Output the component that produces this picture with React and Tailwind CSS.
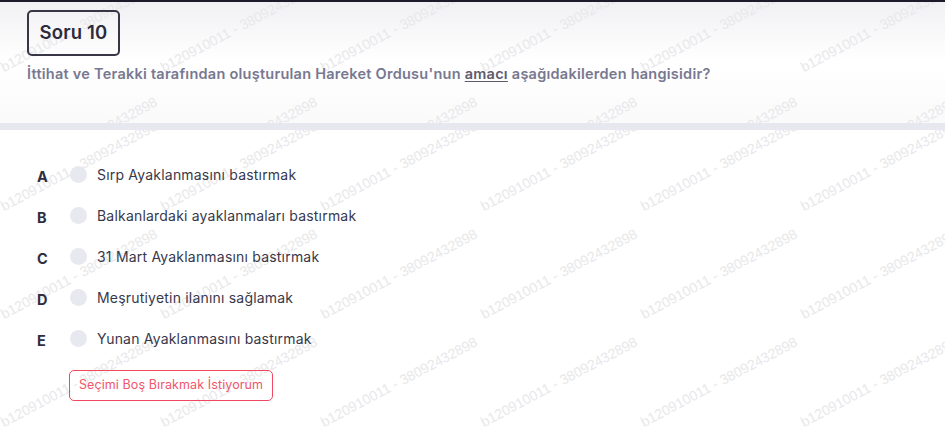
import React from "react";

const WM = "b120910011 - 38092432898";

function Watermark({ startX, startY, rows, cols, dx, dy }) {
  const items = [];
  for (let r = 0; r < rows; r++) {
    for (let c = 0; c < cols; c++) {
      items.push(
        <span
          key={r + "-" + c}
          className="absolute whitespace-nowrap text-[14px] leading-none text-[#e8e8ea] origin-bottom-left"
          style={{
            left: startX + c * dx,
            top: startY + r * dy - 14,
            transform: "rotate(-28deg)",
            fontFamily: '"Liberation Sans", Arial, sans-serif',
          }}
        >
          {WM}
        </span>
      );
    }
  }
  return <div className="pointer-events-none absolute inset-0 overflow-hidden">{items}</div>;
}

const options = [
  ["A", "Sırp Ayaklanmasını bastırmak"],
  ["B", "Balkanlardaki ayaklanmaları bastırmak"],
  ["C", "31 Mart Ayaklanmasını bastırmak"],
  ["D", "Meşrutiyetin ilanını sağlamak"],
  ["E", "Yunan Ayaklanmasını bastırmak"],
];

export default function App() {
  return (
    <div
      className="relative h-[432px] w-[945px] overflow-hidden bg-white"
      style={{ fontFamily: 'Inter, "Open Sans", sans-serif' }}
    >
      <div className="h-[2px] bg-[#1c1b2b]" />
      <div className="relative h-[121px] bg-gradient-to-b from-[#f1f1f4] via-white to-[#fafafb] px-[27px] pt-[8px]">
        <Watermark startX={5} startY={72} rows={2} cols={7} dx={160} dy={115} />
        <div className="relative flex h-[46px] w-[93px] items-center justify-center rounded-[5px] border-2 border-[#363646]">
          <span className="text-[18.5px] font-semibold tracking-[0.2px] text-[#2b2b3c]">Soru 10</span>
        </div>
        <p className="relative mt-[9px] text-[14.5px] font-semibold leading-[18px] tracking-[0.25px] text-[#787890]">
          İttihat ve Terakki tarafından oluşturulan Hareket Ordusu'nun{" "}
          <span className="text-[#5b5b70] underline underline-offset-2">amacı</span> aşağıdakilerden hangisidir?
        </p>
      </div>
      <div className="h-[7px] bg-[#e7e7f0]" />
      <div className="relative h-[302px] pt-[24px]">
        <Watermark startX={5} startY={83} rows={4} cols={7} dx={160} dy={108} />
        <div className="relative flex flex-col">
          {options.map(([l, t]) => (
            <div key={l} className="flex h-[41px] items-center pl-[37px]">
              <span className="mt-[4px] w-[33px] text-[14.5px] font-bold text-[#2e2e40]">{l}</span>
              <span className="h-[17px] w-[17px] rounded-full bg-[#e8e8f0]" />
              <span className="ml-[10px] text-[14px] tracking-[0.2px] text-[#38384c]">{t}</span>
            </div>
          ))}
          <div className="pl-[69px] pt-[11px]">
            <button className="flex h-[31px] w-[204px] items-center justify-center rounded-[5px] border border-[#ef4960] bg-transparent text-[12.5px] tracking-[0.1px] text-[#f0566a]">
              Seçimi Boş Bırakmak İstiyorum
            </button>
          </div>
        </div>
      </div>
    </div>
  );
}
